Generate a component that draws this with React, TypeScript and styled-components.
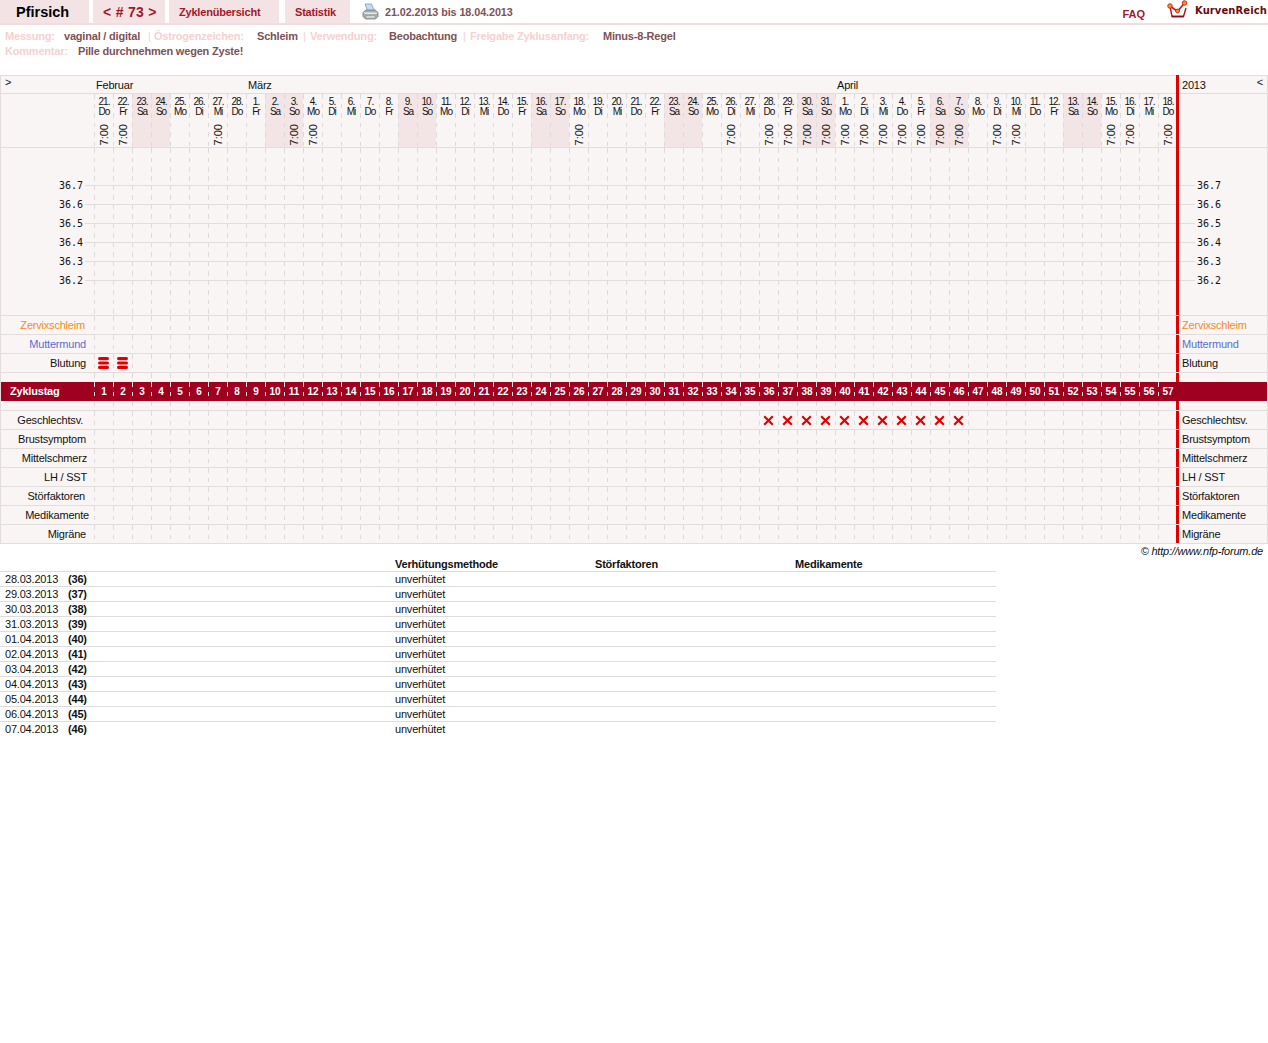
import React from 'react';
import styled, { createGlobalStyle, css } from 'styled-components';

const Global = createGlobalStyle`
  html, body { margin: 0; padding: 0; background: #fff; }
  body { font-family: "Liberation Sans", Arial, sans-serif; font-size: 11px; letter-spacing: -0.2px; color: #111; }
`;

const BORDER = '#e2dcdc';
const CELL_BG = '#f9f5f5';
const WEEKEND = '#f3e5e6';
const RED = '#e00000';
const DARK = '#a00020';

const Page = styled.div`
  width: 1268px;
`;

const Header = styled.header`
  display: flex;
  align-items: stretch;
  height: 25px;
  box-sizing: border-box;
  border-bottom: 2px solid #f3dcdd;
`;

const Tab = styled.a<{ $w: number; $ml: number; $size: number; $pl: number; $color: string; $ls?: number }>`
  display: flex;
  align-items: center;
  box-sizing: border-box;
  width: ${p => p.$w}px;
  margin-left: ${p => p.$ml}px;
  padding-left: ${p => p.$pl}px;
  background: #f4e3e4;
  font-size: ${p => p.$size}px;
  font-weight: bold;
  letter-spacing: ${p => p.$ls ?? -0.2}px;
  color: ${p => p.$color};
  white-space: pre;
`;

const PrinterSlot = styled.span`
  display: flex;
  align-items: center;
  margin-left: 12px;
`;

const Range = styled.span`
  display: flex;
  align-items: center;
  margin-left: 6px;
  font-weight: bold;
  font-size: 10.8px;
  letter-spacing: -0.08px;
  color: #7d5258;
`;

const Faq = styled.a`
  display: flex;
  align-items: center;
  margin-left: auto;
  padding-top: 4px;
  font-weight: bold;
  font-size: 11px;
  letter-spacing: 0;
  color: #a3172b;
`;

const Logo = styled.div`
  display: flex;
  align-items: flex-start;
  margin-left: 22px;
  width: 101px;
`;

const LogoText = styled.span`
  margin-left: 7px;
  padding-top: 5px;
  font-family: "DejaVu Sans", sans-serif;
  font-weight: bold;
  font-size: 10px;
  letter-spacing: 0.08px;
  line-height: 12px;
  color: #6a0a10;
  white-space: nowrap;
`;

const Meta = styled.div`
  padding: 4px 0 16px 5px;
`;

const MetaLine = styled.div`
  display: flex;
  height: 15px;
  line-height: 15px;
  font-weight: bold;
  white-space: nowrap;
`;

const MetaItem = styled.span<{ $w?: number; $kind: 'label' | 'value' | 'pipe' }>`
  ${p => (p.$w ? `width: ${p.$w}px;` : '')}
  flex: none;
  font-weight: ${p => (p.$kind === 'pipe' ? 'normal' : 'bold')};
  color: ${p => (p.$kind === 'value' ? '#7d5258' : '#f7d0d1')};
`;

const Chart = styled.section`
  border-top: 1px solid ${BORDER};
  border-left: 1px solid ${BORDER};
  border-right: 1px solid ${BORDER};
`;

const Row = styled.div<{ $h: number; $plain?: boolean; $dark?: boolean }>`
  display: flex;
  box-sizing: border-box;
  height: ${p => p.$h}px;
  background: ${p => (p.$dark ? DARK : CELL_BG)};
  border-bottom: ${p => (p.$plain ? 'none' : `1px solid ${BORDER}`)};
`;

const hLine = (pos: string, size: string) => `linear-gradient(${BORDER}, ${BORDER}) ${pos} / ${size} no-repeat`;

const Label = styled.div<{ $pr?: number; $color?: string; $line?: boolean }>`
  flex: none;
  width: 93px;
  box-sizing: border-box;
  padding-right: ${p => p.$pr ?? 8}px;
  text-align: right;
  line-height: 18px;
  color: ${p => p.$color ?? '#111'};
  white-space: nowrap;
  ${p => p.$line && css`background: ${hLine('right 0 top 9px', '9px 1px')};`}
`;

const CornerLabel = styled.div`
  flex: none;
  width: 93px;
  box-sizing: border-box;
  padding-left: 4px;
  line-height: 13px;
  color: #111;
`;

const TempText = styled.span`
  font-family: "DejaVu Sans Mono", monospace;
  font-size: 10px;
  letter-spacing: 0;
  line-height: 19px;
  color: #111;
`;

const Cell = styled.div<{ $weekend?: boolean; $line?: boolean; $onDark?: boolean }>`
  flex: none;
  width: 19px;
  box-sizing: border-box;
  display: flex;
  align-items: center;
  justify-content: center;
  background-color: ${p => (p.$weekend ? WEEKEND : 'transparent')};
  background-image:
    linear-gradient(
      ${p => (p.$onDark ? '#f0e0e0' : '#dedada')} 0 5px,
      transparent 5px 10px,
      ${p => (p.$onDark ? '#f0e0e0' : '#dedada')} 10px 14px,
      transparent 14px 19px
    )
    ${p => (p.$line ? `, linear-gradient(${BORDER}, ${BORDER})` : '')};
  background-size: 1px 19px ${p => (p.$line ? ', 100% 1px' : '')};
  background-position: 0 0 ${p => (p.$line ? ', 0 9px' : '')};
  background-repeat: repeat-y ${p => (p.$line ? ', no-repeat' : '')};
`;

const Bar = styled.div<{ $through?: boolean; $top?: boolean; $off?: boolean }>`
  flex: none;
  width: 3px;
  margin-left: -1px;
  background: ${p => (p.$off ? 'transparent' : RED)};
  ${p => p.$through && 'margin-bottom: -1px;'}
  ${p => p.$top && 'margin-top: -1px;'}
`;

const Side = styled.div<{ $color?: string; $line?: boolean }>`
  flex: 1;
  display: flex;
  justify-content: space-between;
  padding: 0 4px 0 3px;
  line-height: 18px;
  color: ${p => p.$color ?? '#111'};
  white-space: nowrap;
  ${p => p.$line && css`
    padding-left: 18px;
    background: ${hLine('left 0 top 9px', '16px 1px')};
  `}
`;

const Months = styled.div`
  display: flex;
  flex: none;
  width: 1083px;
`;

const Month = styled.div<{ $days: number }>`
  width: ${p => p.$days * 19}px;
  box-sizing: border-box;
  padding-left: 2px;
  line-height: 18px;
  color: #111;
`;

const Arrow = styled.span`
  line-height: 13px;
`;

const DateCell = styled(Cell)`
  flex-direction: column;
  justify-content: flex-start;
  padding-top: 3px;
  padding-left: 1px;
`;

const DayNum = styled.span`
  font-size: 10px;
  line-height: 10px;
  letter-spacing: -1px;
  color: #111;
  white-space: nowrap;
`;

const Time = styled.span`
  margin-top: 7px;
  writing-mode: vertical-rl;
  transform: rotate(180deg);
  font-size: 11px;
  letter-spacing: 0;
  line-height: 11px;
  color: #111;
`;

const CycleTitle = styled.div`
  flex: none;
  width: 93px;
  box-sizing: border-box;
  padding-left: 9px;
  line-height: 19px;
  font-weight: bold;
  color: #fff;
`;

const CycleNum = styled.span`
  margin-left: 1px;
  font-size: 10px;
  letter-spacing: 0;
  font-weight: bold;
  color: #fff;
`;

const Copyright = styled.div`
  height: 14px;
  line-height: 14px;
  padding-right: 5px;
  text-align: right;
  font-style: italic;
  color: #111;
`;

const Table = styled.section`
  width: 996px;
`;

const TableRow = styled.div<{ $head?: boolean }>`
  display: grid;
  grid-template-columns: 395px 200px 200px 201px;
  box-sizing: border-box;
  height: ${p => (p.$head ? 14 : 15)}px;
  line-height: ${p => (p.$head ? 13 : 14)}px;
  border-bottom: 1px solid #dddddd;
  font-weight: ${p => (p.$head ? 'bold' : 'normal')};
  color: #111;
  &:last-child { border-bottom: none; }
`;

const DateCol = styled.div`
  display: flex;
  padding-left: 5px;
`;

const DateText = styled.span`
  width: 63px;
`;

const Bold = styled.b`
  font-weight: bold;
`;

const Printer = () => (
  <svg width="17" height="17" viewBox="0 0 17 17">
    <path d="M3 1h6.5l3 7H5.5z" fill="#c4dcf0" stroke="#7d9ab5" strokeWidth=".8" />
    <path d="M1 9.5l3-2.5h9l3 2.5v4l-2.5 2.5h-10L1 13.5z" fill="#a9adb0" stroke="#75797c" strokeWidth=".8" />
    <path d="M1.6 9.6h13.8l-1 1.4H2.6z" fill="#e8e9ea" />
    <path d="M4 12.5h9v2.8H4z" fill="#d6d8d9" stroke="#85898c" strokeWidth=".5" />
  </svg>
);

const Crown = () => (
  <svg width="21" height="19" viewBox="0 0 21 19">
    <path d="M3 6l2 10.5h11.5L19 8" fill="none" stroke="#b01020" strokeWidth="1.4" />
    <path d="M3 6l7.5 5.5L17.5 3" fill="none" stroke="#c8141e" strokeWidth="1.6" />
    <path d="M5 16.5h11.5" stroke="#8a0a14" strokeWidth="1.6" />
    <circle cx="3" cy="6" r="2.3" fill="#f09020" stroke="#c8141e" strokeWidth=".8" />
    <circle cx="10.5" cy="11" r="2" fill="#f09020" stroke="#c8141e" strokeWidth=".8" />
    <circle cx="17.5" cy="3" r="2.3" fill="#f09020" stroke="#c8141e" strokeWidth=".8" />
  </svg>
);

const Bleed = () => (
  <svg width="11" height="12" viewBox="0 0 11 12">
    <rect x="0" y="0" width="11" height="3.2" rx="1.6" fill={RED} />
    <rect x="0" y="4.4" width="11" height="3.2" rx="1.6" fill={RED} />
    <rect x="0" y="8.8" width="11" height="3.2" rx="1.6" fill={RED} />
  </svg>
);

const Cross = () => (
  <svg width="11" height="11" viewBox="0 0 11 11">
    <path d="M1.2 1.2l8.6 8.6M9.8 1.2l-8.6 8.6" stroke={RED} strokeWidth="2.2" fill="none" />
  </svg>
);

const WEEKDAYS = ['Mo', 'Di', 'Mi', 'Do', 'Fr', 'Sa', 'So'];
const counts = [
  { first: 21, last: 28 },
  { first: 1, last: 31 },
  { first: 1, last: 18 },
];
const days: { n: number; wd: string; weekend: boolean }[] = [];
let wdIndex = 3;
counts.forEach(m => {
  for (let n = m.first; n <= m.last; n++) {
    days.push({ n, wd: WEEKDAYS[wdIndex], weekend: wdIndex >= 5 });
    wdIndex = (wdIndex + 1) % 7;
  }
});
const TIMED = new Set([0, 1, 6, 10, 11, 25, 33, 35, 36, 37, 38, 39, 40, 41, 42, 43, 44, 45, 47, 48, 53, 54, 56]);
const TEMPS = ['36.7', '36.6', '36.5', '36.4', '36.3', '36.2'];

const Blank = ({ line, onDark }: { line?: boolean; onDark?: boolean }) => (
  <>
    {days.map((_, i) => (
      <Cell key={i} $line={line} $onDark={onDark} />
    ))}
  </>
);

const TopRows = [
  { name: 'Zervixschleim', pr: 9, color: '#f58a1f' },
  { name: 'Muttermund', pr: 8, color: '#5a6fd0' },
];
const BottomRows = [
  { name: 'Brustsymptom', pr: 8 },
  { name: 'Mittelschmerz', pr: 7 },
  { name: 'LH / SST', pr: 7 },
  { name: 'Störfaktoren', pr: 9 },
  { name: 'Medikamente', pr: 5 },
  { name: 'Migräne', pr: 8 },
];

const ENTRIES = [
  ['28.03.2013', 36], ['29.03.2013', 37], ['30.03.2013', 38], ['31.03.2013', 39],
  ['01.04.2013', 40], ['02.04.2013', 41], ['03.04.2013', 42], ['04.04.2013', 43],
  ['05.04.2013', 44], ['06.04.2013', 45], ['07.04.2013', 46],
];

export default function App() {
  return (
    <Page>
      <Global />
      <Header>
        <Tab $w={89} $ml={0} $pl={16} $size={14.5} $ls={0} $color="#000">Pfirsich</Tab>
        <Tab $w={72} $ml={4} $pl={10} $size={14} $ls={0.3} $color="#a3172b">{'< # 73 >'}</Tab>
        <Tab $w={110} $ml={4} $pl={10} $size={11} $color="#a3172b">Zyklenübersicht</Tab>
        <Tab $w={65} $ml={6} $pl={10} $size={11} $color="#a3172b">Statistik</Tab>
        <PrinterSlot><Printer /></PrinterSlot>
        <Range>21.02.2013 bis 18.04.2013</Range>
        <Faq>FAQ</Faq>
        <Logo>
          <Crown />
          <LogoText>KurvenReich</LogoText>
        </Logo>
      </Header>

      <Meta>
        <MetaLine>
          <MetaItem $kind="label" $w={59}>Messung:</MetaItem>
          <MetaItem $kind="value" $w={84}>vaginal / digital</MetaItem>
          <MetaItem $kind="pipe" $w={6}>|</MetaItem>
          <MetaItem $kind="label" $w={103}>Östrogenzeichen:</MetaItem>
          <MetaItem $kind="value" $w={46}>Schleim</MetaItem>
          <MetaItem $kind="pipe" $w={7}>|</MetaItem>
          <MetaItem $kind="label" $w={79}>Verwendung:</MetaItem>
          <MetaItem $kind="value" $w={74}>Beobachtung</MetaItem>
          <MetaItem $kind="pipe" $w={7}>|</MetaItem>
          <MetaItem $kind="label" $w={133}>Freigabe Zyklusanfang:</MetaItem>
          <MetaItem $kind="value">Minus-8-Regel</MetaItem>
        </MetaLine>
        <MetaLine>
          <MetaItem $kind="label" $w={73}>Kommentar:</MetaItem>
          <MetaItem $kind="value">Pille durchnehmen wegen Zyste!</MetaItem>
        </MetaLine>
      </Meta>

      <Chart>
        <Row $h={18}>
          <CornerLabel>&gt;</CornerLabel>
          <Months>
            <Month $days={8}>Februar</Month>
            <Month $days={31}>März</Month>
            <Month $days={18}>April</Month>
          </Months>
          <Bar $through $top />
          <Side>
            <span>2013</span>
            <Arrow>&lt;</Arrow>
          </Side>
        </Row>

        <Row $h={54}>
          <Label />
          {days.map((d, i) => (
            <DateCell key={i} $weekend={d.weekend}>
              <DayNum>{d.n}.</DayNum>
              <DayNum>{d.wd}</DayNum>
              {TIMED.has(i) && <Time>7:00</Time>}
            </DateCell>
          ))}
          <Bar $through />
          <Side />
        </Row>

        <Row $h={28} $plain>
          <Label />
          <Blank />
          <Bar />
          <Side />
        </Row>
        {TEMPS.map(t => (
          <Row key={t} $h={19} $plain>
            <Label $line $pr={11}><TempText>{t}</TempText></Label>
            <Blank line />
            <Bar />
            <Side $line><TempText>{t}</TempText></Side>
          </Row>
        ))}
        <Row $h={26}>
          <Label />
          <Blank />
          <Bar />
          <Side />
        </Row>

        {TopRows.map(r => (
          <Row key={r.name} $h={19}>
            <Label $pr={r.pr} $color={r.color}>{r.name}</Label>
            <Blank />
            <Bar />
            <Side $color={r.color}>{r.name}</Side>
          </Row>
        ))}
        <Row $h={19}>
          <Label>Blutung</Label>
          {days.map((_, i) => (
            <Cell key={i}>{i < 2 && <Bleed />}</Cell>
          ))}
          <Bar />
          <Side>Blutung</Side>
        </Row>
        <Row $h={9} $plain>
          <Label />
          <Blank />
          <Bar />
          <Side />
        </Row>
        <Row $h={19} $plain $dark>
          <CycleTitle>Zyklustag</CycleTitle>
          {days.map((_, i) => (
            <Cell key={i} $onDark><CycleNum>{i + 1}</CycleNum></Cell>
          ))}
          <Bar $off />
          <Side />
        </Row>
        <Row $h={10}>
          <Label />
          <Blank />
          <Bar />
          <Side />
        </Row>
        <Row $h={19}>
          <Label $pr={11}>Geschlechtsv.</Label>
          {days.map((_, i) => (
            <Cell key={i}>{i >= 35 && i <= 45 && <Cross />}</Cell>
          ))}
          <Bar />
          <Side>Geschlechtsv.</Side>
        </Row>
        {BottomRows.map(r => (
          <Row key={r.name} $h={19}>
            <Label $pr={r.pr}>{r.name}</Label>
            <Blank />
            <Bar />
            <Side>{r.name}</Side>
          </Row>
        ))}
      </Chart>

      <Copyright>© http://www.nfp-forum.de</Copyright>

      <Table>
        <TableRow $head>
          <div />
          <div>Verhütungsmethode</div>
          <div>Störfaktoren</div>
          <div>Medikamente</div>
        </TableRow>
        {ENTRIES.map(([date, n]) => (
          <TableRow key={date}>
            <DateCol>
              <DateText>{date}</DateText>
              <Bold>({n})</Bold>
            </DateCol>
            <div>unverhütet</div>
            <div />
            <div />
          </TableRow>
        ))}
      </Table>
    </Page>
  );
}
